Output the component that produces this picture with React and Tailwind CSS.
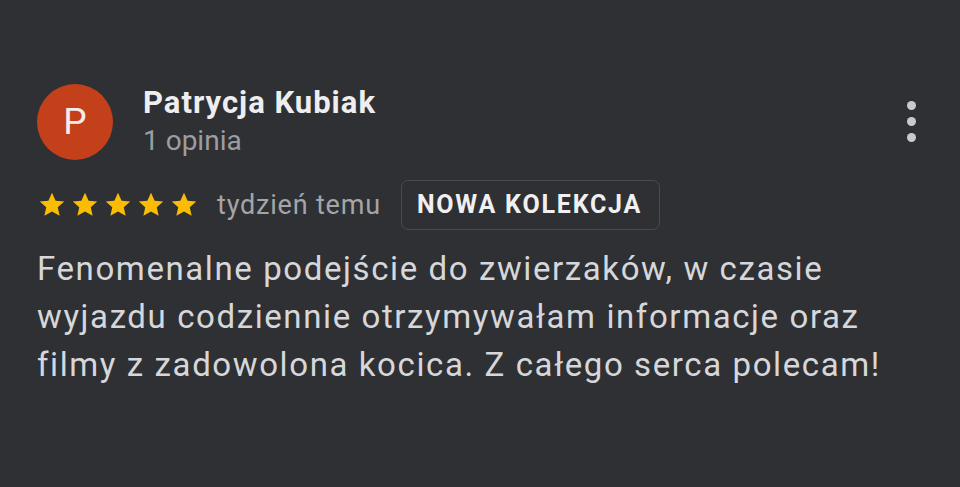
export default function App() {
  return (
    <div
      className="min-h-[487px] w-full bg-[#2f3033] text-[#e3e3e6]"
      style={{ fontFamily: "Roboto, 'Noto Sans', sans-serif" }}
    >
      <div className="pl-[37px] pr-[40px] pt-[84px]">
        {/* header */}
        <div className="flex items-start">
          <div className="flex h-[76px] w-[76px] shrink-0 items-center justify-center rounded-full bg-[#c4401a] text-[37px] text-[#f4ece8]">
            P
          </div>
          <div className="ml-[30px] flex flex-col">
            <span className="mt-[1px] text-[31px] font-bold leading-[36px] tracking-[1px] text-[#eeeef0]">
              Patrycja Kubiak
            </span>
            <span className="mt-[4px] text-[28px] leading-[32px] text-[#9c9da1]">1 opinia</span>
          </div>
          <button className="ml-auto mt-[13px] flex flex-col items-center gap-[7px] p-1">
            <span className="h-[9px] w-[9px] rounded-full bg-[#c8c9cc]" />
            <span className="h-[9px] w-[9px] rounded-full bg-[#c8c9cc]" />
            <span className="h-[9px] w-[9px] rounded-full bg-[#c8c9cc]" />
          </button>
        </div>

        {/* rating row */}
        <div className="mt-[20px] flex items-center">
          <div className="flex gap-[3px]">
            {[0, 1, 2, 3, 4].map((i) => (
              <svg key={i} viewBox="0 0 24 24" className="h-[30px] w-[30px]">
                <path
                  d="M12 2.2l2.9 6.3 6.9.7-5.2 4.6 1.5 6.8L12 17.1l-6.1 3.5 1.5-6.8-5.2-4.6 6.9-.7z"
                  fill="#fbbc04"
                />
              </svg>
            ))}
          </div>
          <span className="ml-[18px] text-[27px] tracking-[0.8px] text-[#a4a5a9]">tydzień temu</span>
          <div className="ml-[20px] flex h-[50px] items-center rounded-[7px] border border-[#4a4b4f] pl-[15px] pr-[17px]">
            <span className="text-[25px] font-bold tracking-[1.8px] text-[#f0f0f2]">NOWA KOLEKCJA</span>
          </div>
        </div>

        {/* review text */}
        <p className="mt-[15px] text-[33px] leading-[48px] tracking-[1.6px] text-[#d6d7da]">
          Fenomenalne podejście do zwierzaków, w czasie
          <br />
          wyjazdu codziennie otrzymywałam informacje oraz
          <br />
          filmy z zadowolona kocica. Z całego serca polecam!
        </p>
      </div>
    </div>
  );
}
